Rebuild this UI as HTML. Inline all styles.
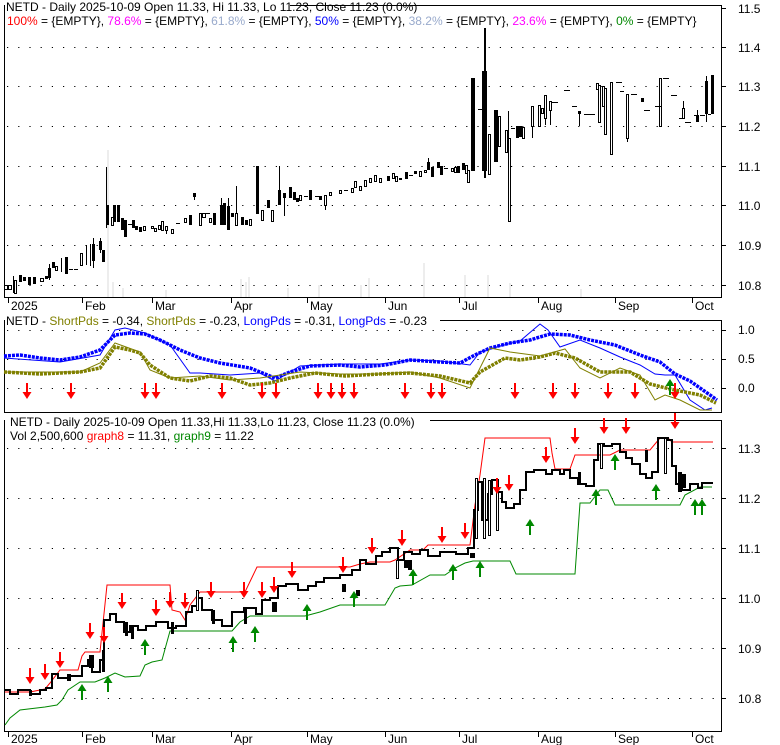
<!DOCTYPE html>
<html><head><meta charset="utf-8"><style>
html,body{margin:0;padding:0;background:#fff;}
svg{display:block;font-family:"Liberation Sans",sans-serif;font-size:12px;}
</style></head><body>
<svg width="780" height="745" viewBox="0 0 780 745" xmlns="http://www.w3.org/2000/svg">
<defs>
<path id="dn" d="M-1,-15h2v9h3.5l-4.5,7l-4.5,-7h3.5z" fill="#f00"/>
<path id="up" d="M-1,15h2v-9h3.5l-4.5,-7l-4.5,7h3.5z" fill="#080"/>
</defs>
<rect width="780" height="745" fill="#fff"/>

<!-- ===== TOP PANEL ===== -->
<g stroke="#000" stroke-width="1" stroke-dasharray="1.2 10" fill="none">
<path d="M7,47.5H720M7,86.5H720M7,126.5H720M7,166.5H720M7,205.5H720M7,245.5H720M7,285.5H720"/>
</g>
<g fill="#ededed">
<rect x="107" y="150" width="2" height="148"/><rect x="112" y="282" width="2" height="16"/><rect x="122" y="288" width="2" height="10"/><rect x="165" y="290" width="2" height="8"/><rect x="240" y="279" width="2" height="19"/><rect x="245" y="282" width="2" height="16"/><rect x="248" y="277" width="2" height="21"/><rect x="287" y="288" width="2" height="10"/><rect x="318" y="285" width="2" height="13"/><rect x="360" y="285" width="2" height="13"/><rect x="368" y="278" width="2" height="20"/><rect x="423" y="263" width="2" height="35"/><rect x="464" y="275" width="2" height="23"/><rect x="487" y="275" width="2" height="23"/><rect x="509" y="283" width="2" height="15"/><rect x="580" y="289" width="2" height="9"/></g>
<rect x="4.5" y="5.5" width="717" height="292" fill="none" stroke="#000"/>
<g fill="#000">
<!-- axis ticks -->
<path d="M722,8h4v1h-4zM722,47h4v1h-4zM722,86h4v1h-4zM722,126h4v1h-4zM722,166h4v1h-4zM722,205h4v1h-4zM722,245h4v1h-4zM722,285h4v1h-4z"/>
<path d="M8,298h1v5h-1zM82,298h1v5h-1zM152,298h1v5h-1zM231,298h1v5h-1zM307,298h1v5h-1zM385,298h1v5h-1zM459,298h1v5h-1zM538,298h1v5h-1zM615,298h1v5h-1zM692,298h1v5h-1z"/>
</g>
<g fill="#000" font-size="12">
<text x="738" y="13">11.5</text><text x="738" y="52">11.4</text><text x="738" y="91">11.3</text><text x="738" y="131">11.2</text><text x="738" y="171">11.1</text><text x="738" y="210">11.0</text><text x="738" y="250">10.9</text><text x="738" y="290">10.8</text>
<text x="11" y="310">2025</text><text x="85" y="310">Feb</text><text x="155" y="310">Mar</text><text x="234" y="310">Apr</text><text x="310" y="310">May</text><text x="388" y="310">Jun</text><text x="462" y="310">Jul</text><text x="541" y="310">Aug</text><text x="618" y="310">Sep</text><text x="695" y="310">Oct</text>
</g>
<!-- candles: hollow -->
<g fill="#fff" stroke="#000" stroke-width="1">
<rect x="4.5" y="285.5" width="3" height="4"/><rect x="8.5" y="285.5" width="3" height="4"/><rect x="14.5" y="280.5" width="2" height="13"/><rect x="40.5" y="278.5" width="3" height="3"/><rect x="55.5" y="266.5" width="2" height="4"/><rect x="80.5" y="253.5" width="2" height="12"/><rect x="92.5" y="244.5" width="2" height="16"/><rect x="111.5" y="217.5" width="2" height="8"/><rect x="143.5" y="226.5" width="2" height="4"/><rect x="151.5" y="226.5" width="2" height="2"/><rect x="154.5" y="228.5" width="2" height="3"/><rect x="158.5" y="225.5" width="2" height="4"/><rect x="161.5" y="221.5" width="2" height="9"/><rect x="165.5" y="226.5" width="2" height="4"/><rect x="171.5" y="229.5" width="2" height="4"/><rect x="184.5" y="218.5" width="2" height="4"/><rect x="199.5" y="213.5" width="2" height="12"/><rect x="202.5" y="213.5" width="3" height="4"/><rect x="209.5" y="218.5" width="2" height="4"/><rect x="235.5" y="213.5" width="2" height="12"/><rect x="249.5" y="219.5" width="2" height="6"/><rect x="261.5" y="210.5" width="2" height="10"/><rect x="271.5" y="210.5" width="2" height="11"/><rect x="299.5" y="195.5" width="2" height="5"/><rect x="324.5" y="195.5" width="2" height="10"/><rect x="329.5" y="192.5" width="2" height="3"/><rect x="339.5" y="190.5" width="2" height="3"/><rect x="351.5" y="188.5" width="2" height="4"/><rect x="354.5" y="181.5" width="2" height="6"/><rect x="359.5" y="186.5" width="2" height="4"/><rect x="364.5" y="180.5" width="2" height="6"/><rect x="369.5" y="178.5" width="2" height="4"/><rect x="374.5" y="175.5" width="2" height="6"/><rect x="379.5" y="178.5" width="2" height="4"/><rect x="392.5" y="173.5" width="2" height="5"/><rect x="395.5" y="176.5" width="2" height="5"/><rect x="419.5" y="171.5" width="2" height="5"/><rect x="424.5" y="170.5" width="2" height="2"/><rect x="451.5" y="168.5" width="2" height="3"/><rect x="454.5" y="167.5" width="2" height="5"/><rect x="465.5" y="165.5" width="2" height="8"/><rect x="467.5" y="170.5" width="2" height="12"/><rect x="488.5" y="134.5" width="2" height="40"/><rect x="498.5" y="116.5" width="2" height="30"/><rect x="505.5" y="130.5" width="2" height="22"/><rect x="508.5" y="138.5" width="2" height="83"/><rect x="522.5" y="127.5" width="2" height="11"/><rect x="531.5" y="106.5" width="2" height="20"/><rect x="538.5" y="105.5" width="2" height="21"/><rect x="541.5" y="108.5" width="2" height="5"/><rect x="544.5" y="95.5" width="2" height="23"/><rect x="549.5" y="101.5" width="2" height="9"/><rect x="596.5" y="83.5" width="2" height="6"/><rect x="598.5" y="85.5" width="2" height="37"/><rect x="602.5" y="86.5" width="2" height="20"/><rect x="604.5" y="88.5" width="2" height="46"/><rect x="610.5" y="82.5" width="2" height="72"/><rect x="626.5" y="94.5" width="2" height="44"/><rect x="659.5" y="78.5" width="2" height="48"/><rect x="682.5" y="108.5" width="2" height="10"/></g>
<!-- candles: filled + wicks -->
<g fill="#000">
<rect x="13" y="276" width="1" height="17"/><rect x="19" y="275" width="3" height="7"/><rect x="23" y="277" width="3" height="4"/><rect x="28" y="277" width="3" height="8"/><rect x="33" y="277" width="3" height="7"/><rect x="45" y="276" width="3" height="3"/><rect x="48" y="268" width="3" height="10"/><rect x="49" y="264" width="1" height="16"/><rect x="52" y="262" width="3" height="6"/><rect x="61" y="258" width="1" height="14"/><rect x="65" y="257" width="3" height="17"/><rect x="69" y="269" width="4" height="1"/><rect x="74" y="269" width="4" height="1"/><rect x="86" y="245" width="1" height="20"/><rect x="90" y="244" width="1" height="22"/><rect x="93" y="238" width="1" height="30"/><rect x="99" y="241" width="3" height="9"/><rect x="100" y="238" width="1" height="15"/><rect x="102" y="250" width="3" height="12"/><rect x="106" y="167" width="1" height="61"/><rect x="106" y="205" width="3" height="20"/><rect x="113" y="205" width="3" height="17"/><rect x="117" y="205" width="3" height="17"/><rect x="121" y="218" width="3" height="12"/><rect x="124" y="220" width="3" height="17"/><rect x="128" y="224" width="4" height="1"/><rect x="132" y="220" width="3" height="8"/><rect x="135" y="226" width="3" height="4"/><rect x="139" y="227" width="3" height="5"/><rect x="166" y="230" width="1" height="4"/><rect x="176" y="223" width="4" height="1"/><rect x="189" y="215" width="3" height="10"/><rect x="193" y="193" width="3" height="4"/><rect x="194" y="196" width="1" height="4"/><rect x="206" y="213" width="4" height="1"/><rect x="213" y="213" width="3" height="12"/><rect x="220" y="205" width="3" height="20"/><rect x="221" y="198" width="1" height="10"/><rect x="223" y="203" width="3" height="22"/><rect x="227" y="206" width="3" height="24"/><rect x="228" y="198" width="1" height="10"/><rect x="231" y="213" width="3" height="4"/><rect x="236" y="186" width="1" height="28"/><rect x="241" y="217" width="3" height="8"/><rect x="245" y="220" width="3" height="5"/><rect x="256" y="166" width="3" height="48"/><rect x="267" y="200" width="3" height="8"/><rect x="278" y="190" width="3" height="15"/><rect x="279" y="166" width="1" height="26"/><rect x="283" y="193" width="3" height="5"/><rect x="284" y="198" width="1" height="18"/><rect x="289" y="187" width="3" height="11"/><rect x="293" y="192" width="3" height="8"/><rect x="296" y="198" width="3" height="4"/><rect x="304" y="196" width="4" height="1"/><rect x="309" y="190" width="3" height="10"/><rect x="315" y="196" width="4" height="1"/><rect x="319" y="196" width="3" height="4"/><rect x="325" y="205" width="1" height="5"/><rect x="344" y="190" width="4" height="1"/><rect x="387" y="176" width="3" height="5"/><rect x="399" y="178" width="3" height="2"/><rect x="405" y="172" width="3" height="7"/><rect x="409" y="175" width="4" height="1"/><rect x="414" y="171" width="3" height="3"/><rect x="427" y="162" width="3" height="8"/><rect x="428" y="158" width="1" height="6"/><rect x="431" y="167" width="3" height="10"/><rect x="437" y="162" width="3" height="6"/><rect x="440" y="166" width="3" height="9"/><rect x="444" y="168" width="4" height="1"/><rect x="457" y="166" width="3" height="7"/><rect x="462" y="163" width="3" height="7"/><rect x="471" y="78" width="4" height="93"/><rect x="478" y="109" width="4" height="1"/><rect x="482" y="71" width="5" height="100"/><rect x="484" y="28" width="2" height="150"/><rect x="494" y="110" width="4" height="52"/><rect x="508" y="111" width="1" height="27"/><rect x="511" y="128" width="4" height="1"/><rect x="516" y="126" width="3" height="12"/><rect x="519" y="126" width="3" height="11"/><rect x="532" y="126" width="1" height="12"/><rect x="545" y="118" width="1" height="7"/><rect x="550" y="110" width="1" height="15"/><rect x="552" y="102" width="6" height="1"/><rect x="564" y="90" width="6" height="1"/><rect x="572" y="106" width="5" height="1"/><rect x="578" y="111" width="3" height="3"/><rect x="579" y="114" width="1" height="12"/><rect x="584" y="114" width="5" height="1"/><rect x="589" y="114" width="6" height="1"/><rect x="616" y="82" width="6" height="1"/><rect x="620" y="91" width="4" height="1"/><rect x="627" y="138" width="1" height="4"/><rect x="631" y="94" width="6" height="1"/><rect x="641" y="98" width="3" height="4"/><rect x="644" y="110" width="6" height="1"/><rect x="655" y="106" width="6" height="1"/><rect x="663" y="78" width="6" height="1"/><rect x="671" y="95" width="6" height="1"/><rect x="679" y="118" width="4" height="1"/><rect x="683" y="101" width="1" height="7"/><rect x="685" y="122" width="6" height="1"/><rect x="694" y="115" width="3" height="1"/><rect x="696" y="115" width="3" height="7"/><rect x="697" y="110" width="1" height="6"/><rect x="700" y="115" width="5" height="1"/><rect x="705" y="81" width="3" height="33"/><rect x="706" y="76" width="1" height="8"/><rect x="708" y="114" width="3" height="1"/><rect x="711" y="75" width="3" height="39"/><rect x="706" y="114" width="1" height="8"/></g>
<!-- Top titles -->
<rect x="5" y="0" width="285" height="13" fill="#fff"/>
<text x="6" y="11" fill="#000">NETD - Daily 2025-10-09 Open 11.33, Hi 11.33, Lo 11.23, Close 11.23 (0.0%)</text>
<text x="7" y="25" fill="#000"><tspan fill="#f00">100%</tspan> = {EMPTY}, <tspan fill="#f0f">78.6%</tspan> = {EMPTY}, <tspan fill="#99aacc">61.8%</tspan> = {EMPTY}, <tspan fill="#00f">50%</tspan> = {EMPTY}, <tspan fill="#99aacc">38.2%</tspan> = {EMPTY}, <tspan fill="#f0f">23.6%</tspan> = {EMPTY}, <tspan fill="#080">0%</tspan> = {EMPTY}</text>

<!-- ===== MIDDLE PANEL ===== -->
<g stroke="#000" stroke-dasharray="1.2 10" fill="none"><path d="M7,330.5H720M7,359.5H720M7,388.5H720"/></g>
<rect x="4.5" y="320.5" width="717" height="92" fill="none" stroke="#000"/>
<g fill="#000"><path d="M722,330h4v1h-4zM722,359h4v1h-4zM722,388h4v1h-4z"/></g>
<text x="738" y="334">1.0</text><text x="738" y="363">0.5</text><text x="738" y="392">0.0</text>
<polyline fill="none" stroke="#00f" stroke-width="1" points="4,358 60,362 100,355 115,330 125,328 145,333 170,345 190,373 200,373 230,375 260,373 275,381 300,366 340,364 380,364 410,360 440,361 470,365 480,352 500,346 520,341 540,324 548,330 560,347 580,340 600,348 620,357 640,365 655,374 665,375 675,375 690,400 705,410 712,408"/>
<polyline fill="none" stroke="#00f" stroke-width="3.5" stroke-dasharray="3 1" points="4,356 20,355 40,358 60,360 80,357 100,350 115,335 130,333 145,334 160,340 180,350 200,358 220,363 250,368 275,378 290,372 310,366 340,365 360,367 385,365 410,360 440,362 460,363 475,355 490,348 510,343 530,340 550,334 570,335 590,340 615,345 640,355 660,362 675,374 690,381 700,388 710,395 717,400"/>
<polyline fill="none" stroke="#808000" stroke-width="1" points="4,372 80,372 100,363 115,343 140,352 150,370 170,378 200,376 230,380 260,378 300,372 340,374 380,374 410,372 440,378 470,388 490,348 510,352 540,356 565,349 580,368 600,378 620,368 640,375 655,400 665,395 680,400 700,410 712,410"/>
<polyline fill="none" stroke="#808000" stroke-width="3.5" stroke-dasharray="3 1" points="4,372 40,374 80,372 100,368 115,347 130,350 140,353 150,365 170,378 190,381 210,376 230,378 250,385 270,383 290,378 315,373 345,376 380,374 410,373 440,376 470,383 480,372 505,358 520,360 540,357 555,353 575,358 600,372 630,372 650,384 670,389 700,395 716,403"/>
<g>
<use href="#dn" x="27" y="398"/><use href="#dn" x="71" y="398"/><use href="#dn" x="145" y="398"/><use href="#dn" x="156" y="398"/><use href="#dn" x="222" y="398"/><use href="#dn" x="262" y="398"/><use href="#dn" x="276" y="398"/><use href="#dn" x="318" y="398"/><use href="#dn" x="331" y="398"/><use href="#dn" x="342" y="398"/><use href="#dn" x="354" y="398"/><use href="#dn" x="405" y="398"/><use href="#dn" x="431" y="398"/><use href="#dn" x="442" y="398"/><use href="#dn" x="515" y="398"/><use href="#dn" x="553" y="398"/><use href="#dn" x="575" y="398"/><use href="#dn" x="608" y="398"/><use href="#dn" x="635" y="398"/><use href="#up" x="670" y="380"/><use href="#dn" x="675" y="398"/>
</g>
<rect x="5" y="314" width="435" height="13" fill="#fff"/>
<text x="6" y="325" fill="#000">NETD - <tspan fill="#808000">ShortPds</tspan> = -0.34, <tspan fill="#808000">ShortPds</tspan> = -0.23, <tspan fill="#00f">LongPds</tspan> = -0.31, <tspan fill="#00f">LongPds</tspan> = -0.23</text>

<!-- ===== BOTTOM PANEL ===== -->
<g stroke="#000" stroke-dasharray="1.2 10" fill="none"><path d="M7,448.5H720M7,498.5H720M7,548.5H720M7,598.5H720M7,648.5H720M7,698.5H720"/></g>
<rect x="4.5" y="420.5" width="717" height="311" fill="none" stroke="#000"/>
<g fill="#000">
<path d="M722,448h4v1h-4zM722,498h4v1h-4zM722,548h4v1h-4zM722,598h4v1h-4zM722,648h4v1h-4zM722,698h4v1h-4z"/>
<path d="M8,732h1v5h-1zM82,732h1v5h-1zM152,732h1v5h-1zM231,732h1v5h-1zM307,732h1v5h-1zM385,732h1v5h-1zM459,732h1v5h-1zM538,732h1v5h-1zM615,732h1v5h-1zM692,732h1v5h-1z"/>
</g>
<text x="738" y="453">11.3</text><text x="738" y="503">11.2</text><text x="738" y="553">11.1</text><text x="738" y="603">11.0</text><text x="738" y="653">10.9</text><text x="738" y="703">10.8</text>
<text x="11" y="743">2025</text><text x="85" y="743">Feb</text><text x="155" y="743">Mar</text><text x="234" y="743">Apr</text><text x="310" y="743">May</text><text x="388" y="743">Jun</text><text x="462" y="743">Jul</text><text x="541" y="743">Aug</text><text x="618" y="743">Sep</text><text x="695" y="743">Oct</text>

<polyline fill="none" stroke="#f00" stroke-width="1" points="5,692 30,692 45,689 50,683 60,670 78,670 82,656 85,652 100,652 107,585 170,585 172,610 180,612 185,620 190,605 200,592 230,592 245,592 257,567 350,567 360,564 370,562 390,562 395,560 410,550 423,550 428,545 470,545 475,505 480,475 485,438 550,438 552,453 555,469 570,469 575,455 610,455 620,450 650,450 660,438 668,438 672,442 713,442"/>
<polyline fill="none" stroke="#080" stroke-width="1" points="5,725 10,718 20,710 45,707 57,705 62,700 68,690 80,682 95,682 105,678 115,673 125,677 140,676 145,665 152,662 162,660 170,631 232,631 240,622 250,616 305,616 320,612 340,605 385,605 395,588 400,586 412,585 430,575 445,575 455,568 465,563 473,561 510,561 516,574 575,574 580,503 590,503 600,490 608,490 615,505 680,505 685,495 700,487 712,487"/>
<!-- price steps -->
<polyline fill="none" stroke="#000" stroke-width="2" points="5,690 10,690 10,694 18,694 18,690 30,690 30,694 40,694 40,690 46,690 46,688 52,688 52,674 58,674 58,678 68,678 68,676 82,676 82,666 88,666 88,660 92,660 92,672 100,672 100,660 104,660 104,620 110,620 110,614 116,614 116,622 124,622 124,632 130,632 130,626 138,626 138,630 146,630 146,626 156,626 156,622 168,622 168,628 176,628 176,626 186,626 186,612 192,612 192,606 198,606 198,598 202,598 202,610 212,610 212,620 222,620 222,626 232,626 232,612 244,612 244,608 256,608 256,614 262,614 262,600 270,600 270,598 278,598 278,586 286,586 286,584 298,584 298,590 308,590 308,586 316,586 316,582 324,582 324,578 340,578 340,575 352,575 352,570 360,570 360,560 366,560 366,564 376,564 376,556 382,556 382,552 390,552 390,548 398,548 398,560 404,560 404,552 412,552 412,554 420,554 420,550 428,550 428,556 440,556 440,552 456,552 456,554 468,554 468,548 474,548 474,510 478,510 478,482 482,482 482,520 488,520 488,494 492,494 492,480 498,480 498,492 502,492 502,502 506,502 506,508 514,508 514,504 520,504 520,490 526,490 526,472 534,472 534,470 546,470 546,474 552,474 552,470 560,470 560,474 564,474 564,470 570,470 570,478 578,478 578,484 586,484 586,486 594,486 594,460 598,460 598,444 604,444 604,446 612,446 612,444 620,444 620,452 626,452 626,458 632,458 632,464 640,464 640,474 646,474 646,478 652,478 652,472 658,472 658,438 668,438 668,440 672,440 672,466 676,466 676,484 682,484 682,490 690,490 690,484 698,484 698,488 702,488 702,483 713,483"/>
<g fill="#000">
<rect x="29" y="690" width="3" height="6"/><rect x="67" y="674" width="4" height="7"/><rect x="89" y="655" width="5" height="13"/><rect x="102" y="650" width="3" height="22"/><rect x="125" y="622" width="3" height="14"/><rect x="131" y="625" width="3" height="14"/><rect x="171" y="622" width="3" height="12"/><rect x="212" y="610" width="3" height="14"/><rect x="244" y="608" width="3" height="16"/><rect x="272" y="602" width="5" height="10"/><rect x="342" y="584" width="4" height="8"/><rect x="356" y="590" width="4" height="6"/><rect x="404" y="560" width="4" height="8"/><rect x="408" y="560" width="4" height="10"/><rect x="470" y="553" width="5" height="5"/><rect x="578" y="472" width="3" height="12"/><rect x="645" y="450" width="3" height="12"/><rect x="678" y="472" width="4" height="20"/><rect x="682" y="474" width="4" height="14"/></g>
<g fill="#fff" stroke="#000">
<rect x="475.5" y="478.5" width="2" height="60"/><rect x="483.5" y="478.5" width="2" height="60"/><rect x="488.5" y="480.5" width="2" height="55"/><rect x="496.5" y="490.5" width="2" height="40"/><rect x="600.5" y="443.5" width="2" height="25"/><rect x="664.5" y="438.5" width="2" height="35"/><rect x="396.5" y="560.5" width="2" height="18"/><rect x="196.5" y="590.5" width="2" height="20"/></g>
<!-- arrows -->
<g>
<use href="#dn" x="30" y="683"/><use href="#dn" x="45" y="679"/><use href="#dn" x="60" y="667"/><use href="#dn" x="90" y="638"/><use href="#dn" x="104" y="642"/><use href="#dn" x="122" y="608"/><use href="#dn" x="156" y="615"/><use href="#dn" x="170" y="607"/><use href="#dn" x="185" y="608"/><use href="#dn" x="211" y="597"/><use href="#dn" x="244" y="597"/><use href="#dn" x="262" y="597"/><use href="#dn" x="274" y="592"/><use href="#dn" x="292" y="577"/><use href="#dn" x="343" y="572"/><use href="#dn" x="372" y="553"/><use href="#dn" x="402" y="545"/><use href="#dn" x="442" y="542"/><use href="#dn" x="465" y="538"/><use href="#dn" x="497" y="493"/><use href="#dn" x="509" y="490"/><use href="#dn" x="546" y="462"/><use href="#dn" x="575" y="443"/><use href="#dn" x="604" y="433"/><use href="#dn" x="626" y="433"/><use href="#dn" x="675" y="428"/>
<use href="#up" x="82" y="685"/><use href="#up" x="108" y="677"/><use href="#up" x="145" y="640"/><use href="#up" x="233" y="637"/><use href="#up" x="255" y="627"/><use href="#up" x="307" y="605"/><use href="#up" x="354" y="592"/><use href="#up" x="413" y="570"/><use href="#up" x="453" y="565"/><use href="#up" x="480" y="562"/><use href="#up" x="530" y="520"/><use href="#up" x="596" y="490"/><use href="#up" x="615" y="455"/><use href="#up" x="656" y="485"/><use href="#up" x="695" y="500"/><use href="#up" x="702" y="500"/>
</g>
<rect x="5" y="415" width="425" height="13" fill="#fff"/>
<text x="10" y="426" fill="#000">NETD - Daily 2025-10-09 Open 11.33,Hi 11.33,Lo 11.23, Close 11.23 (0.0%)</text>
<text x="10" y="440" fill="#000">Vol 2,500,600 <tspan fill="#f00">graph8</tspan> = 11.31, <tspan fill="#080">graph9</tspan> = 11.22</text>
</svg>
</body></html>
